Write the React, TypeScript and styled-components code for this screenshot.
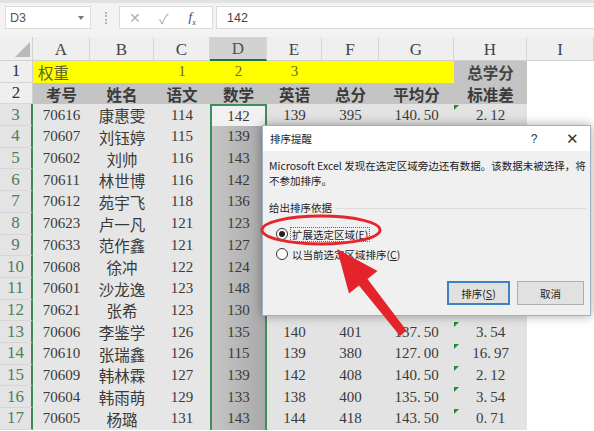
import React from 'react';
import styled, { createGlobalStyle } from 'styled-components';

const GlobalStyle = createGlobalStyle`
  html, body { margin: 0; padding: 0; background: #fff; overflow: hidden; }
  body { font-family: "Liberation Serif", "Noto Sans CJK SC", serif; }
  * { box-sizing: border-box; }
`;

const Page = styled.div`
  position: relative;
  width: 594px;
  height: 431px;
  overflow: hidden;
  background: #fff;
`;

/* ---------- formula bar ---------- */
const FormulaBar = styled.div`
  height: 37px;
  background: #f3f3f3;
  border-top: 3px solid #e2e2e2;
  display: flex;
  align-items: flex-start;
  padding: 3px 0 0 5px;
  font-family: "Liberation Sans", "Noto Sans CJK SC", sans-serif;
`;

const NameBox = styled.div`
  width: 86px;
  height: 23px;
  background: #fff;
  border: 1px solid #dcdcdc;
  display: flex;
  align-items: center;
  justify-content: space-between;
  padding: 0 4px 0 4px;
  font-size: 12.5px;
  color: #555;
`;

const DropArrow = styled.span`
  width: 0;
  height: 0;
  border-left: 3px solid transparent;
  border-right: 3px solid transparent;
  border-top: 4px solid #777;
  margin-right: 2px;
`;

const DotSep = styled.span`
  width: 1px;
  height: 12px;
  margin: 6px 12px 0 14px;
  border-left: 2px dotted #b5b5b5;
`;

const FxBox = styled.div`
  width: 94px;
  height: 23px;
  background: #fff;
  border: 1px solid #dcdcdc;
  display: flex;
  align-items: center;
  padding-left: 9px;
  gap: 18px;
  color: #b0b0b0;
  font-size: 14px;
`;

const FxGlyph = styled.span`
  font-family: "Liberation Serif", serif;
  font-style: italic;
  color: #444;
  font-size: 13px;
  margin-left: 2px;
  sub { font-size: 8px; }
`;

const FormulaInput = styled.div`
  flex: 1;
  height: 23px;
  margin-left: 3px;
  background: #fff;
  border: 1px solid #dcdcdc;
  border-right: none;
  display: flex;
  align-items: center;
  padding-left: 10px;
  font-size: 12.5px;
  color: #444;
`;

/* ---------- sheet ---------- */
const Sheet = styled.div`
  display: grid;
  grid-template-columns: 33px 57px 64px 56px 57px 55px 57px 75px 73px 1fr;
  grid-template-rows: 24px repeat(17, 21.7px);
`;

const Corner = styled.div`
  position: relative;
  background: #efefef;
  border-right: 1px solid #d3d3d3;
  border-bottom: 1px solid #d0d0d0;
  &::after {
    content: '';
    position: absolute;
    right: 2px;
    bottom: 3px;
    width: 0;
    height: 0;
    border-left: 15px solid transparent;
    border-bottom: 15px solid #b9b9b9;
  }
`;

const HeadCell = styled.div<{ $active?: boolean }>`
  display: flex;
  align-items: center;
  justify-content: center;
  font-size: 17px;
  color: ${p => (p.$active ? '#3c5f48' : '#444')};
  background: ${p => (p.$active ? '#d2d2d2' : '#efefef')};
  border-right: 1px solid #d6d6d6;
  border-bottom: ${p => (p.$active ? '2px solid #217346' : '1px solid #d0d0d0')};
  padding-top: 2px;
`;

const RowHead = styled.div<{ $sel?: boolean }>`
  display: flex;
  align-items: center;
  justify-content: center;
  font-size: 17px;
  color: ${p => (p.$sel ? '#4d7e5d' : '#333')};
  background: ${p => (p.$sel ? '#e4e4e4' : '#efefef')};
  border-bottom: 1px solid #d6d6d6;
  border-right: ${p => (p.$sel ? '2px solid #3a8a57' : '1px solid #cfcfcf')};
`;

const Cell = styled.div<{ $bg: string; $left?: boolean; $bold?: boolean; $color?: string; $cjk?: boolean }>`
  position: relative;
  display: flex;
  align-items: center;
  justify-content: ${p => (p.$left ? 'flex-start' : 'center')};
  padding-left: ${p => (p.$left ? '5px' : '0')};
  background: ${p => p.$bg};
  font-size: ${p => (p.$cjk ? '15.5px' : '15px')};
  font-weight: ${p => (p.$bold ? 700 : 400)};
  color: ${p => p.$color || '#3a3a3a'};
  white-space: nowrap;
  font-family: ${p => (p.$cjk ? '"Noto Sans CJK SC", "Liberation Serif", sans-serif' : '"Liberation Serif", "Noto Sans CJK SC", serif')};
`;

const SelCell = styled(Cell)<{ $first?: boolean }>`
  background: ${p => (p.$first ? '#f1f1f1' : 'linear-gradient(to right, #c6c6c6, #a9a9a9)')};
  border-left: 2px solid #3f8c5c;
  border-right: 2px solid #3f8c5c;
  border-top: ${p => (p.$first ? '2px solid #3f8c5c' : 'none')};
`;

const ErrMark = styled.span`
  position: absolute;
  left: 0;
  top: 1px;
  width: 0;
  height: 0;
  border-top: 5px solid #1f8b3a;
  border-right: 5px solid transparent;
`;

const Dot = styled.span`
  margin-right: 3px;
`;

/* ---------- dialog ---------- */
const Dialog = styled.div`
  position: absolute;
  left: 262px;
  top: 125px;
  width: 329px;
  height: 191px;
  border: 1px solid #9db0c4;
  background: #f0f0f0;
  box-shadow: 0 0 10px rgba(0, 0, 0, 0.35);
  display: flex;
  flex-direction: column;
  font-family: "Noto Sans CJK SC", "Liberation Sans", sans-serif;
  font-size: 10.5px;
  color: #222;
`;

const TitleBar = styled.div`
  height: 25px;
  background: #fff;
  display: flex;
  align-items: center;
  padding-left: 7px;
`;

const Title = styled.span`
  flex: 1;
`;

const TitleBtn = styled.span<{ $w: number; $size: number }>`
  width: ${p => p.$w}px;
  text-align: center;
  font-size: ${p => p.$size}px;
  color: #333;
  font-family: "Liberation Sans", sans-serif;
`;

const Body = styled.div`
  flex: 1;
  display: flex;
  flex-direction: column;
  padding: 8px 4px 0 6px;
`;

const Message = styled.div`
  line-height: 14.5px;
  width: 318px;
`;

const GroupLabel = styled.div`
  margin-top: 13px;
  display: flex;
  align-items: center;
  gap: 4px;
  line-height: 14px;
  &::after {
    content: '';
    flex: 1;
    border-top: 1px solid #dcdcdc;
  }
`;

const RadioRow = styled.div<{ $first?: boolean }>`
  height: 18px;
  margin-top: ${p => (p.$first ? '10px' : '2px')};
  display: flex;
  align-items: center;
  padding-left: 7px;
  gap: 2px;
`;

const RadioCircle = styled.span<{ $on?: boolean }>`
  width: 12px;
  height: 12px;
  border-radius: 50%;
  border: 1px solid #333;
  background: #fff;
  display: flex;
  align-items: center;
  justify-content: center;
  &::after {
    content: '';
    width: 6px;
    height: 6px;
    border-radius: 50%;
    background: ${p => (p.$on ? '#222' : 'transparent')};
  }
`;

const RadioLabel = styled.span<{ $focus?: boolean }>`
  padding: 0 1px;
  border: 1px ${p => (p.$focus ? 'dotted #666' : 'solid transparent')};
  line-height: 13px;
`;

const ButtonRow = styled.div`
  margin-top: auto;
  margin-bottom: 10px;
  display: flex;
  justify-content: flex-end;
  gap: 7px;
  padding-right: 2px;
`;

const Btn = styled.div<{ $def?: boolean; $w: number }>`
  width: ${p => p.$w}px;
  height: 24px;
  display: flex;
  align-items: center;
  justify-content: center;
  background: #e1e1e1;
  border: ${p => (p.$def ? '2px solid #3d83c4' : '1px solid #adadad')};
`;

const U = styled.span`
  text-decoration: underline;
`;

/* ---------- annotation ---------- */
const Annotation = styled.svg`
  position: absolute;
  left: 0;
  top: 0;
  pointer-events: none;
`;

type Row = [string, string, string, string, string, string, string, string];

// rows 4–11: columns E–H lie under the dialog and are not visible
const data: Row[] = [
  ['70616', '康惠雯', '114', '142', '139', '395', '140.50', '2.12'],
  ['70607', '刘钰婷', '115', '139', '', '', '', ''],
  ['70602', '刘帅', '116', '143', '', '', '', ''],
  ['70611', '林世博', '116', '142', '', '', '', ''],
  ['70612', '苑宇飞', '118', '136', '', '', '', ''],
  ['70623', '卢一凡', '121', '123', '', '', '', ''],
  ['70633', '范作鑫', '121', '127', '', '', '', ''],
  ['70608', '徐冲', '122', '124', '', '', '', ''],
  ['70601', '沙龙逸', '123', '148', '', '', '', ''],
  ['70621', '张希', '123', '130', '', '', '', ''],
  ['70606', '李鉴学', '126', '135', '140', '401', '137.50', '3.54'],
  ['70610', '张瑞鑫', '126', '115', '139', '380', '127.00', '16.97'],
  ['70609', '韩林霖', '127', '139', '142', '408', '140.50', '2.12'],
  ['70604', '韩雨萌', '129', '133', '138', '400', '135.50', '3.54'],
  ['70605', '杨璐', '131', '143', '144', '418', '143.50', '0.71'],
];

const headers = ['考号', '姓名', '语文', '数学', '英语', '总分', '平均分', '标准差'];
const cols = ['A', 'B', 'C', 'D', 'E', 'F', 'G', 'H', 'I'];

const fmt = (v: string) => {
  const i = v.indexOf('.');
  if (i < 0) return v;
  return (
    <>
      {v.slice(0, i)}
      <Dot>.</Dot>
      {v.slice(i + 1)}
    </>
  );
};

const BODY = '#e6e6e6';
const BODY_R = '#e3e3e3';
const HEAD2 = '#c4c4c4';
const YELLOW = '#ffff00';

export default function App() {
  return (
    <Page>
      <GlobalStyle />
      <FormulaBar>
        <NameBox>
          D3
          <DropArrow />
        </NameBox>
        <DotSep />
        <FxBox>
          <span>✕</span>
          <span>✓</span>
          <FxGlyph>
            f<sub>x</sub>
          </FxGlyph>
        </FxBox>
        <FormulaInput>142</FormulaInput>
      </FormulaBar>

      <Sheet>
        <Corner />
        {cols.map(c => (
          <HeadCell key={c} $active={c === 'D'}>
            {c}
          </HeadCell>
        ))}

        {/* row 1 */}
        <RowHead>1</RowHead>
        <Cell $bg={YELLOW} $left $cjk $color="#5e5e28">
          权重
        </Cell>
        <Cell $bg={YELLOW} />
        <Cell $bg={YELLOW} $color="#6c6c24">1</Cell>
        <Cell $bg={YELLOW} $color="#6c6c24">2</Cell>
        <Cell $bg={YELLOW} $color="#6c6c24">3</Cell>
        <Cell $bg={YELLOW} />
        <Cell $bg={YELLOW} />
        <Cell $bg={HEAD2} $bold $cjk $color="#444">
          总学分
        </Cell>
        <Cell $bg="#fff" />

        {/* row 2 */}
        <RowHead>2</RowHead>
        {headers.map(h => (
          <Cell key={h} $bg={HEAD2} $bold $cjk $color="#3a3a3a">
            {h}
          </Cell>
        ))}
        <Cell $bg="#fff" />

        {data.map((r, i) => (
          <React.Fragment key={r[0]}>
            <RowHead $sel>{i + 3}</RowHead>
            <Cell $bg={BODY}>{r[0]}</Cell>
            <Cell $bg={BODY} $cjk>
              {r[1]}
            </Cell>
            <Cell $bg={BODY}>{r[2]}</Cell>
            <SelCell $bg="" $first={i === 0}>
              {r[3]}
            </SelCell>
            <Cell $bg={BODY_R}>{r[4]}</Cell>
            <Cell $bg={BODY_R}>{r[5]}</Cell>
            <Cell $bg={BODY_R}>{fmt(r[6])}</Cell>
            <Cell $bg={BODY_R}>
              <ErrMark />
              {fmt(r[7])}
            </Cell>
            <Cell $bg="#fff" />
          </React.Fragment>
        ))}
      </Sheet>

      <Dialog>
        <TitleBar>
          <Title>排序提醒</Title>
          <TitleBtn $w={40} $size={12}>
            ?
          </TitleBtn>
          <TitleBtn $w={36} $size={15}>
            ✕
          </TitleBtn>
        </TitleBar>
        <Body>
          <Message>Microsoft Excel 发现在选定区域旁边还有数据。该数据未被选择，将不参加排序。</Message>
          <GroupLabel>给出排序依据</GroupLabel>
          <RadioRow $first>
            <RadioCircle $on />
            <RadioLabel $focus>
              扩展选定区域(<U>E</U>)
            </RadioLabel>
          </RadioRow>
          <RadioRow>
            <RadioCircle />
            <RadioLabel>
              以当前选定区域排序(<U>C</U>)
            </RadioLabel>
          </RadioRow>
          <ButtonRow>
            <Btn $def $w={63}>
              排序(<U>S</U>)
            </Btn>
            <Btn $w={67}>取消</Btn>
          </ButtonRow>
        </Body>
      </Dialog>

      <Annotation width="594" height="431" viewBox="0 0 594 431">
        <ellipse cx="321" cy="230" rx="59" ry="14" fill="none" stroke="#e6262c" strokeWidth="3" />
        <polygon
          points="337,249 377.5,271 367.5,279 406.5,330.5 400,336 359,285.5 349,293.5"
          fill="#e3242b"
        />
      </Annotation>
    </Page>
  );
}
